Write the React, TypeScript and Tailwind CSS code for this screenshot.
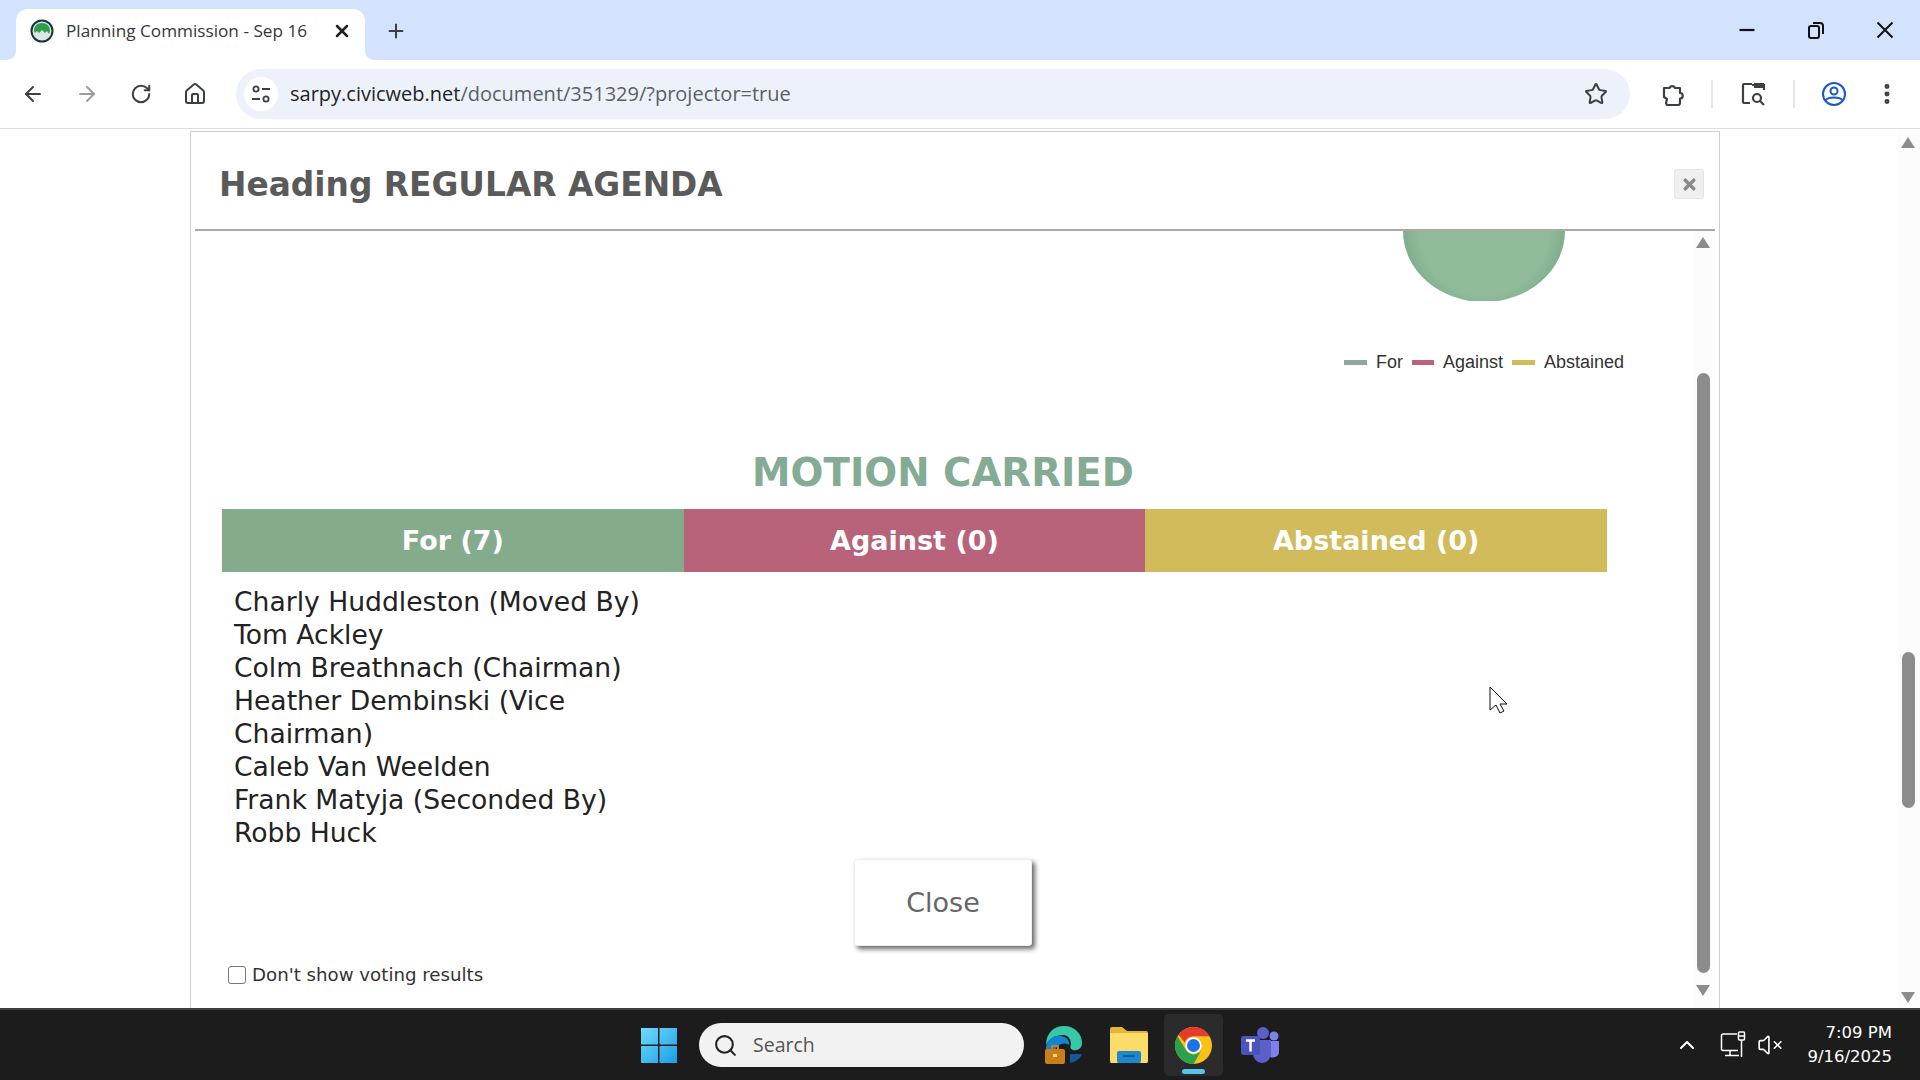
import { ArrowLeft, ArrowRight, RotateCw, Home, Star, X, Plus, Search, EllipsisVertical, ChevronUp, VolumeX } from "lucide-react";

const FONT = "font-['DejaVu_Sans',sans-serif]";

const voters = [
  "Charly Huddleston (Moved By)",
  "Tom Ackley",
  "Colm Breathnach (Chairman)",
  "Heather Dembinski (Vice Chairman)",
  "Caleb Van Weelden",
  "Frank Matyja (Seconded By)",
  "Robb Huck",
];

function Up() {
  return <div className="h-0 w-0 border-x-[7px] border-b-[11px] border-x-transparent border-b-[#8c8c8c]" />;
}

function Down() {
  return <div className="h-0 w-0 border-x-[7px] border-t-[11px] border-x-transparent border-t-[#8c8c8c]" />;
}

function Favicon() {
  return (
    <svg width="24" height="24" viewBox="0 0 24 24">
      <circle cx="12" cy="12" r="10.5" fill="#dbe9df" stroke="#16324a" strokeWidth="2" />
      <path d="M4 12c0-5 3-8 8-8s8 3 8 8l-1 3-2-3-2 2-3-3-3 3-2-2-2 2z" fill="#2f9e4b" />
    </svg>
  );
}

function TuneIcon() {
  return (
    <svg width="22" height="22" viewBox="0 0 22 22" fill="none" stroke="#3c4043" strokeWidth="1.8">
      <circle cx="6" cy="6" r="2.6" />
      <path d="M12 6h8M2 16h8" />
      <circle cx="16" cy="16" r="2.6" />
    </svg>
  );
}

function PuzzleIcon() {
  return (
    <svg width="24" height="24" viewBox="0 0 24 24" fill="none" stroke="#3c4043" strokeWidth="2.2" strokeLinejoin="round">
      <path d="M3 6h5.500a3 3 0 0 1 5.500 0H19v5a2.500 2.500 0 0 1 0 5.500V21a2 2 0 0 1-2 2H6l-1-2 1-4-3-2z" />
    </svg>
  );
}

function TabSearchIcon() {
  return (
    <svg width="26" height="26" viewBox="0 0 26 26" fill="none" stroke="#3c4043" strokeWidth="2.2">
      <path d="M12 3H4a1 1 0 0 0-1 1v17a1 1 0 0 0 1 1h6" />
      <path d="M12 4h12v5" />
      <path d="M14 2h10v5H14z" fill="#3c4043" stroke="none" />
      <circle cx="17" cy="17" r="4" />
      <path d="m20 20 4 4" />
    </svg>
  );
}

function MinimizeIcon() {
  return (
    <svg width="20" height="16" viewBox="0 0 20 16" fill="none" stroke="#111" strokeWidth="2.2">
      <path d="M2.500 8h15" />
    </svg>
  );
}

function RestoreIcon() {
  return (
    <svg width="20" height="18" viewBox="0 0 20 18" fill="none" stroke="#111" strokeWidth="2">
      <rect x="3" y="5" width="10" height="12" rx="2" />
      <path d="M7 2h7a3 3 0 0 1 3 3v8" />
    </svg>
  );
}

function CloseIcon() {
  return (
    <svg width="20" height="18" viewBox="0 0 20 18" fill="none" stroke="#111" strokeWidth="2">
      <path d="m2.500 1.500 15 15M17.500 1.500l-15 15" />
    </svg>
  );
}

function ProfileIcon() {
  return (
    <svg width="26" height="26" viewBox="0 0 26 26" fill="none" stroke="#1a56c4" strokeWidth="2">
      <circle cx="13" cy="13" r="11" />
      <circle cx="13" cy="10" r="3.500" />
      <path d="M4.500 19c3-3.500 14-3.500 17 0" />
    </svg>
  );
}

function TabFlare({ side }: { side: "left" | "right" }) {
  return side === "left" ? (
    <svg width="10" height="10" viewBox="0 0 10 10" className="absolute -left-[10px] bottom-0">
      <path d="M0 10c5 0 10-3 10-10v10z" fill="#fff" />
    </svg>
  ) : (
    <svg width="10" height="10" viewBox="0 0 10 10" className="absolute -right-[10px] bottom-0">
      <path d="M10 10C5 10 0 7 0 0v10z" fill="#fff" />
    </svg>
  );
}

function WindowsLogo() {
  return (
    <svg width="36" height="36" viewBox="0 0 36 36">
      <defs>
        <linearGradient id="win" x1="0" y1="0" x2="1" y2="1">
          <stop offset="0" stopColor="#6fdcfb" />
          <stop offset="1" stopColor="#1a9de6" />
        </linearGradient>
      </defs>
      <path d="M0 1h17v16.500H0zM18.500 1H36v16.500H18.500zM0 19h17v17H0zM18.500 19H36v17H18.500z" fill="url(#win)" />
    </svg>
  );
}

function EdgeLogo() {
  return (
    <svg width="38" height="40" viewBox="0 0 38 40">
      <path d="M1 20C1 8 9 1 19 1c11 0 18 8 18 17 0 5-4 8-9 7-3-1-3-3-2-6 0-5-3-9-8-9-8 0-14 4-17 10z" fill="#35c9a8" />
      <path d="M1 22c1-7 8-12 15-11 6 1 9 5 8 9-5-4-13 0-14 6H1z" fill="#1384d3" />
      <path d="M25 29h12c-2 5-7 8-12 9z" fill="#16569e" />
      <rect x="0" y="24" width="20" height="15" rx="2" fill="#c97f18" />
      <rect x="7" y="21" width="6" height="4" fill="none" stroke="#c97f18" strokeWidth="2" />
      <rect x="8" y="29" width="4" height="3" fill="#f3d27a" />
    </svg>
  );
}

function FolderLogo() {
  return (
    <svg width="38" height="36" viewBox="0 0 38 36">
      <path d="M0 2a2 2 0 0 1 2-2h10l5 4h19a2 2 0 0 1 2 2v28a2 2 0 0 1-2 2H2a2 2 0 0 1-2-2z" fill="#e5b53a" />
      <path d="M0 6h38v28a2 2 0 0 1-2 2H2a2 2 0 0 1-2-2z" fill="#fbdc66" />
      <rect x="7" y="24" width="24" height="12" rx="2" fill="#1f87cc" />
      <rect x="13" y="28" width="12" height="2" fill="#0e5f9e" />
    </svg>
  );
}

function ChromeLogo() {
  return (
    <svg width="37" height="37" viewBox="0 0 36 36">
      <circle cx="18" cy="18" r="18" fill="#fbc116" />
      <path d="M18 0a18 18 0 0 1 15.600 9H18a9 9 0 0 0-8.500 6L3.500 7.500A18 18 0 0 1 18 0z" fill="#e33b2e" />
      <path d="M2.400 9A18 18 0 0 0 18 36l7.800-13.500a9 9 0 0 1-15.500-.5z" fill="#2aa14a" />
      <circle cx="18" cy="18" r="8" fill="#fff" />
      <circle cx="18" cy="18" r="6.300" fill="#1a73e8" />
    </svg>
  );
}

function TeamsLogo() {
  return (
    <svg width="38" height="36" viewBox="0 0 38 36">
      <circle cx="22" cy="6" r="6" fill="#5b5fc7" />
      <circle cx="33" cy="9" r="4.500" fill="#7b83eb" />
      <path d="M27 14h11v11a6 6 0 0 1-10 4z" fill="#7b83eb" />
      <path d="M11 13h19v14a9 9 0 0 1-18 0z" fill="#5b5fc7" />
      <rect x="0" y="9" width="19" height="19" rx="2" fill="#4b53bc" />
      <path d="M5 13.500h9M9.500 13.500v11" stroke="#fff" strokeWidth="2.500" />
    </svg>
  );
}

function NetworkIcon() {
  return (
    <svg width="30" height="30" viewBox="0 0 30 30" fill="none" stroke="#fff" strokeWidth="1.500">
      <path d="M17 4H3a1.500 1.500 0 0 0-1.500 1.500V19A1.500 1.500 0 0 0 3 20.500h15" />
      <path d="M10 21v4M5 25.500h14" />
      <rect x="18.500" y="2" width="6" height="8" rx="1" />
      <path d="M21.500 10v17M18.500 6h6" />
    </svg>
  );
}

function PieSlice() {
  return (
    <svg width="164" height="71" viewBox="0 0 164 71">
      <defs>
        <radialGradient id="pie" cx="82" cy="0" r="81" gradientUnits="userSpaceOnUse">
          <stop offset="0.8" stopColor="#90bb9a" />
          <stop offset="1" stopColor="#7fae8c" />
        </radialGradient>
      </defs>
      <path d="M1 0h162a81 71 0 0 1-162 0z" fill="url(#pie)" />
    </svg>
  );
}

function Cursor() {
  return (
    <svg width="20" height="28" viewBox="0 0 20 28" className="absolute left-[1489px] top-[686px]">
      <path d="M1 1v23l6-5 4 8 4-2-4-7h7z" fill="#fff" stroke="#111" strokeWidth="1" />
    </svg>
  );
}

function ToolButton({ children }: { children: React.ReactNode }) {
  return <div className="flex h-[36px] w-[54px] items-center justify-center text-[#3c4043]">{children}</div>;
}

export default function App() {
  return (
    <div className="relative flex h-[1080px] w-[1920px] flex-col overflow-hidden bg-white">
      {/* tab strip */}
      <div className="flex h-[60px] shrink-0 items-end bg-[#d3e3fd] pl-[16px]">
        <div className="relative flex h-[51px] w-[349px] items-center rounded-t-[12px] bg-white pb-[7px] pl-[14px] pr-[13px]">
          <TabFlare side="left" />
          <Favicon />
          <span className="ml-[12px] flex-1 whitespace-nowrap font-['Open_Sans',sans-serif] text-[17.2px] text-[#33373b]">
            Planning Commission - Sep 16
          </span>
          <X size={20} strokeWidth={3} className="text-[#222]" />
          <TabFlare side="right" />
        </div>
        <div className="ml-[20px] flex h-[51px] items-center pb-[7px]">
          <Plus size={22} strokeWidth={2.2} className="text-[#3c4043]" />
        </div>
        <div className="flex-1" />
        <div className="flex h-[60px] items-center gap-[49px] pr-[25px]">
          <MinimizeIcon />
          <RestoreIcon />
          <CloseIcon />
        </div>
      </div>

      {/* toolbar */}
      <div className="flex h-[69px] shrink-0 items-center border-b border-[#dedede] pl-[6px]">
        <ToolButton>
          <ArrowLeft size={24} strokeWidth={2} />
        </ToolButton>
        <ToolButton>
          <ArrowRight size={24} strokeWidth={2} className="text-[#9b9ea3]" />
        </ToolButton>
        <ToolButton>
          <RotateCw size={22} strokeWidth={2.2} />
        </ToolButton>
        <ToolButton>
          <Home size={24} strokeWidth={2} />
        </ToolButton>
        <div className="ml-[14px] flex h-[50px] w-[1394px] items-center rounded-full bg-[#edf2fa] pl-[8px] pr-[22px]">
          <div className="flex h-[34px] w-[34px] items-center justify-center rounded-full bg-white">
            <TuneIcon />
          </div>
          <span className="ml-[12px] flex-1 font-['Open_Sans',sans-serif] text-[20px] text-[#5b5f66]">
            <span className="text-[#1f2328]">sarpy.civicweb.net</span>/document/351329/?projector=true
          </span>
          <Star size={24} strokeWidth={2} className="text-[#3c4043]" />
        </div>
        <div className="ml-[31px] flex items-center text-[#3c4043]">
          <PuzzleIcon />
          <div className="ml-[26px] h-[28px] w-[2px] bg-[#e3e6ea]" />
          <div className="ml-[27px]">
            <TabSearchIcon />
          </div>
          <div className="ml-[27px] h-[28px] w-[2px] bg-[#e3e6ea]" />
          <div className="ml-[26px]">
            <ProfileIcon />
          </div>
          <EllipsisVertical size={26} strokeWidth={2.6} className="ml-[27px]" />
        </div>
      </div>

      {/* page */}
      <div className={`flex min-h-0 flex-1 pl-[190px] pt-[2px] ${FONT}`}>
        <div className="flex w-[1530px] shrink-0 flex-col border-x border-t border-[#cfcfcf] bg-white">
          <div className="mx-[4px] flex h-[99px] shrink-0 items-center justify-between border-b-2 border-[#a9a9a9] pl-[24px] pr-[11px] pt-[7px]">
            <h1 className="pt-[4px] text-[32.8px] font-bold text-[#5a5a5a]">Heading REGULAR AGENDA</h1>
            <div className="flex h-[30px] w-[30px] items-center justify-center rounded-[3px] border border-[#e4e4e4] bg-[#efefef]">
              <X size={17} strokeWidth={5} className="text-[#8a8a8a]" />
            </div>
          </div>

          <div className="flex min-h-0 flex-1">
            <div className="flex min-w-0 flex-1 flex-col pl-[2px]">
              <div className="flex h-[70px] justify-end overflow-hidden pr-[127px]">
                <PieSlice />
              </div>
              <div className="mt-[49px] flex h-[24px] items-center justify-end pr-[69px] font-['Liberation_Sans',sans-serif] text-[18px] text-[#333]">
                <div className="h-[5px] w-[23px] bg-[#8fa89a]" />
                <span className="ml-[9px]">For</span>
                <div className="ml-[9px] h-[5px] w-[22px] bg-[#bc637b]" />
                <span className="ml-[9px]">Against</span>
                <div className="ml-[9px] h-[5px] w-[23px] bg-[#d1bb5a]" />
                <span className="ml-[9px]">Abstained</span>
              </div>
              <div className="mt-[76px] text-center text-[38.7px] font-bold leading-[46px] text-[#84ab93]">MOTION CARRIED</div>
              <div className="ml-[29px] mr-[86px] mt-[13px] grid h-[63px] grid-cols-3 pt-0 text-[27px] font-bold text-white">
                <div className="flex items-center justify-center bg-[#84ab8c] pt-[2px]">For (7)</div>
                <div className="flex items-center justify-center bg-[#b8637a] pt-[2px]">Against (0)</div>
                <div className="flex items-center justify-center bg-[#d1bb5a] pt-[2px]">Abstained (0)</div>
              </div>
              <div className="ml-[29px] mr-[86px] grid grid-cols-3">
                <ul className="pl-[12px] pt-[13px] text-[26.6px] leading-[33px] text-[#222]">
                  {voters.map((v) => (
                    <li key={v}>{v}</li>
                  ))}
                </ul>
              </div>
              <div className="mt-[10px] flex justify-center">
                <div className="flex h-[87px] w-[178px] items-center justify-center rounded-[3px] border border-[#eeeeee] bg-white pt-[2px] text-[27px] text-[#666] shadow-[3px_3px_5px_#666]">
                  Close
                </div>
              </div>
              <label className="ml-[35px] mt-[15px] flex items-center text-[18.2px] text-[#333]">
                <span className="h-[18px] w-[18px] rounded-[3px] border border-[#777] bg-white" />
                <span className="ml-[6px]">Don't show voting results</span>
              </label>
            </div>
            <div className="mr-[6px] flex w-[20px] shrink-0 flex-col items-center bg-[#fcfcfc] pb-[12px] pt-[6px]">
              <Up />
              <div className="mt-[125px] w-[13px] flex-1 rounded-full bg-[#8c8c8c]" />
              <div className="mt-[12px]">
                <Down />
              </div>
            </div>
          </div>
        </div>
        <div className="flex-1" />
        <div className="-mt-[2px] flex w-[22px] shrink-0 flex-col items-center bg-[#fcfcfc] pb-[5px] pr-[2px] pt-[8px]">
          <Up />
          <div className="mt-[504px] h-[156px] w-[13px] rounded-full bg-[#8c8c8c]" />
          <div className="flex-1" />
          <Down />
        </div>
      </div>

      {/* taskbar */}
      <div className="flex h-[72px] shrink-0 items-center border-t-2 border-[#3f3f3f] bg-[#1c1c1c]">
        <div className="ml-[641px]">
          <WindowsLogo />
        </div>
        <div className="ml-[22px] flex h-[44px] w-[325px] items-center rounded-full bg-[#f2f2f2] pl-[14px]">
          <Search size={25} strokeWidth={2} className="text-[#222]" />
          <span className="ml-[15px] font-['Open_Sans',sans-serif] text-[19.5px] text-[#555]">Search</span>
        </div>
        <div className="ml-[21px]">
          <EdgeLogo />
        </div>
        <div className="ml-[27px]">
          <FolderLogo />
        </div>
        <div className="relative ml-[16px] flex h-[62px] w-[59px] items-center justify-center rounded-[5px] bg-[#2b2b2b]">
          <ChromeLogo />
          <div className="absolute bottom-[2px] h-[5px] w-[23px] rounded-full bg-[#58c4ec]" />
        </div>
        <div className="ml-[18px]">
          <TeamsLogo />
        </div>
        <div className="flex-1" />
        <ChevronUp size={24} strokeWidth={2} className="text-white" />
        <div className="ml-[21px]">
          <NetworkIcon />
        </div>
        <VolumeX size={26} strokeWidth={1.5} className="ml-[7px] text-white" />
        <div className={`ml-[24px] mr-[28px] text-right text-[16.5px] leading-[24px] text-white ${FONT}`}>
          <div>7:09 PM</div>
          <div>9/16/2025</div>
        </div>
      </div>

      {/* mouse pointer */}
      <Cursor />
    </div>
  );
}
